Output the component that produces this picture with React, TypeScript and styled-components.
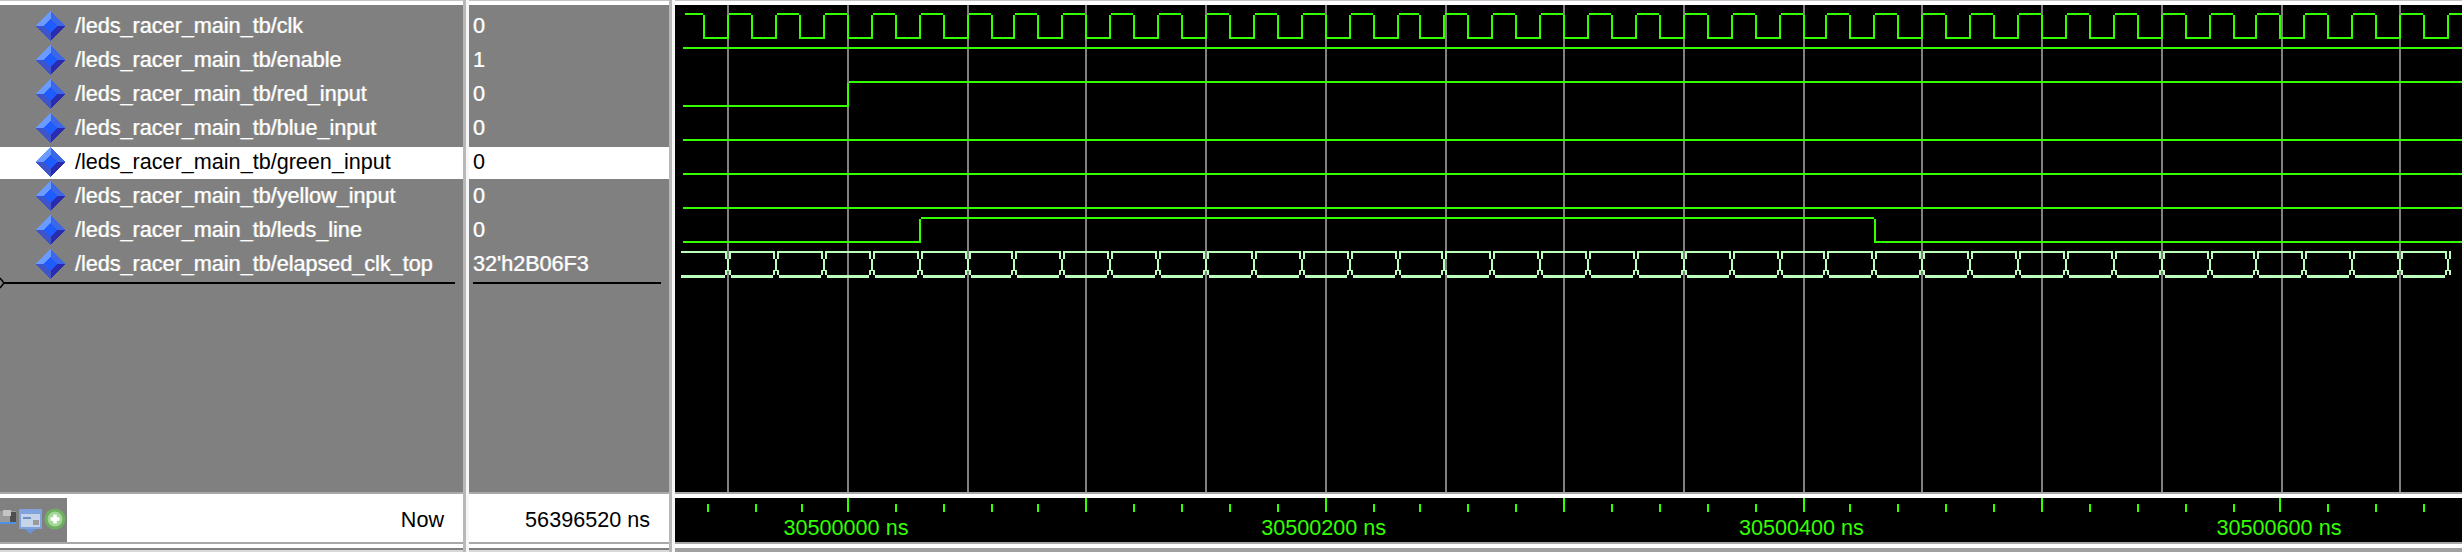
import React from "react";
import styled, { createGlobalStyle } from "styled-components";

const GRID_BASE = 848;
const GRID_STEP = 119.42;
const HALF_PERIOD = 23.885;
const VIEW_RIGHT = 2462;

const GREEN = "#33ff00";
const BUS_GREEN = "#bcffbc";

const SIGNALS = [
  { name: "/leds_racer_main_tb/clk", value: "0" },
  { name: "/leds_racer_main_tb/enable", value: "1" },
  { name: "/leds_racer_main_tb/red_input", value: "0" },
  { name: "/leds_racer_main_tb/blue_input", value: "0" },
  { name: "/leds_racer_main_tb/green_input", value: "0", selected: true },
  { name: "/leds_racer_main_tb/yellow_input", value: "0" },
  { name: "/leds_racer_main_tb/leds_line", value: "0" },
  { name: "/leds_racer_main_tb/elapsed_clk_top", value: "32'h2B06F3" },
];

const RULER_LABELS = ["30500000 ns", "30500200 ns", "30500400 ns", "30500600 ns"];

const GlobalStyle = createGlobalStyle`
  html, body {
    margin: 0;
    padding: 0;
    background: #ffffff;
    overflow: hidden;
  }
`;

const Window = styled.div`
  display: grid;
  grid-template-columns: 463px 6px 200px 6px 1fr;
  width: 2462px;
  height: 552px;
  overflow: hidden;
  font-family: "Liberation Sans", Arial, sans-serif;
`;

const Column = styled.div`
  display: flex;
  flex-direction: column;
  min-width: 0;
`;

const TopEdge = styled.div`
  height: 5px;
  box-sizing: border-box;
  flex: none;
  background: #ffffff;
  border-top: 1px solid #c4c4c4;
`;

const PanelBody = styled.div`
  height: 487px;
  flex: none;
  box-sizing: border-box;
  padding-top: 6px;
  background: #808080;
`;

const WaveBody = styled.div`
  height: 487px;
  flex: none;
  background: #000000;
`;

const Separator = styled.div`
  height: 6px;
  flex: none;
  box-sizing: border-box;
  background: #ffffff;
  border-top: 2px solid #a8a8a8;
`;

const Footer = styled.div`
  height: 44px;
  flex: none;
  display: flex;
  align-items: center;
  background: #ffffff;
  font-size: 21.6px;
  color: #000000;
`;

const FooterRight = styled(Footer)<{ $pad: number }>`
  justify-content: flex-end;
  padding-right: ${({ $pad }) => $pad}px;
  padding-bottom: 1px;
  box-sizing: border-box;
`;

const IconTray = styled.div`
  width: 67px;
  height: 44px;
  flex: none;
  background: #808080;
`;

const NowLabel = styled.span`
  margin-left: auto;
  margin-right: 19px;
`;

const ScrollBar = styled.div<{ $from: number; $to: number }>`
  height: 4px;
  flex: none;
  box-sizing: border-box;
  background: repeating-linear-gradient(90deg, #f4f4f4 0 2px, #d0d0d0 2px 4px) no-repeat
      ${({ $from }) => $from}px 2px / ${({ $from, $to }) => $to - $from}px 2px,
    #d8d8d8;
  border-top: 2px solid #808080;
`;

const PlainBar = styled.div`
  height: 4px;
  flex: none;
  background: #a0a0a0;
`;

const SplitterBar = styled.div`
  display: flex;
`;

const SplitterShade = styled.div`
  width: 3px;
  background: #b8b8b8;
`;

const SplitterLight = styled.div`
  width: 3px;
  background: #f6f6f6;
`;

const Row = styled.div<{ $selected?: boolean; $left: number }>`
  display: flex;
  align-items: center;
  gap: 9px;
  height: 32px;
  box-sizing: border-box;
  margin-bottom: 2px;
  padding: 0 0 2px ${({ $left }) => $left}px;
  background: ${({ $selected }) => ($selected ? "#ffffff" : "transparent")};
  color: ${({ $selected }) => ($selected ? "#000000" : "#ffffff")};
  font-size: 21.6px;
  white-space: nowrap;
  text-shadow: ${({ $selected }) =>
    $selected ? "none" : "-0.6px 0 rgba(190, 215, 255, 0.55), 0.6px 0 rgba(255, 225, 180, 0.55)"};
`;

const CursorLine = styled.div<{ $left: number; $right: number }>`
  display: flex;
  align-items: center;
  height: 2px;
  margin: -1px ${({ $right }) => $right}px 0 ${({ $left }) => $left}px;
  background: #000000;
`;

const CursorMark = styled.svg`
  flex: none;
  margin-left: -4px;
  overflow: visible;
`;

const Ruler = styled.div`
  position: relative;
  height: 44px;
  flex: none;
  background: #000000;
  overflow: hidden;
`;

const RulerLabel = styled.span`
  position: absolute;
  top: 19px;
  transform: translateX(-50%);
  color: ${GREEN};
  font-size: 21.6px;
  line-height: 22px;
  white-space: nowrap;
`;

const WaveSvg = styled.svg`
  display: block;
  shape-rendering: crispEdges;
`;

// the capture was doubled, so everything lands on a 2px raster
const snap = (x: number) => Math.floor((x + 0.7) / 2) * 2;

function clockPath() {
  let d = "";
  let k = -6;
  let prev = 684;
  let high = true;
  while (GRID_BASE + k * HALF_PERIOD < VIEW_RIGHT + 30) {
    const e = snap(GRID_BASE + k * HALF_PERIOD);
    const y = high ? 14 : 38;
    const from = high ? prev + 1 : prev - 1;
    const to = high ? e - 1 : e + 1;
    d += `M${from} ${y}H${to}M${e} 15V39`;
    prev = e;
    high = !high;
    k += 1;
  }
  return d;
}

function busPath() {
  let top = "";
  let bottom = "";
  let stubs = "";
  let prev = 678;
  for (let k = -5; GRID_BASE + k * HALF_PERIOD < VIEW_RIGHT + 30; k += 2) {
    const t = snap(GRID_BASE + k * HALF_PERIOD);
    top += `M${prev + 3} 252H${t - 3}`;
    bottom += `M${prev + 3} 276.5H${t - 3}`;
    stubs += `M${t - 2} 251V259M${t + 2} 251V259M${t} 259V271M${t - 2} 270V275M${t + 2} 270V275`;
    prev = t;
  }
  return { top, bottom, stubs };
}

function rulerTicks() {
  const ticks: { x: number; major: boolean }[] = [708, 756, 802].map((x) => ({ x, major: false }));
  for (let j = 0; GRID_BASE + j * 47.77 < VIEW_RIGHT; j += 1) {
    ticks.push({ x: snap(GRID_BASE + j * 47.77), major: j % 5 === 0 });
  }
  return ticks;
}

function gridLines() {
  const xs: number[] = [];
  for (let k = -1; GRID_BASE + k * GRID_STEP < VIEW_RIGHT; k += 1) {
    xs.push(Math.round((GRID_BASE + k * GRID_STEP) / 2) * 2);
  }
  return xs;
}

function Diamond() {
  return (
    <svg width="31" height="30" viewBox="0 0 31 30" shapeRendering="crispEdges" style={{ flex: "none" }}>
      <polygon points="15.5,0 0,15 8,15 15.5,8" fill="#6b9bff" />
      <polygon points="15.5,0 31,15 23,15 15.5,8" fill="#3c68e8" />
      <polygon points="0,15 15.5,30 15.5,22 8,15" fill="#3d55c8" />
      <polygon points="31,15 15.5,30 15.5,22 23,15" fill="#2b2bb0" />
      <polygon points="15.5,8 23,15 15.5,22 8,15" fill="#1f5cff" />
    </svg>
  );
}

function TrayIcons() {
  return (
    <svg width="67" height="44" viewBox="0 0 67 44">
      <rect x="0" y="13" width="16" height="11" fill="#9a9a9a" />
      <rect x="10" y="14" width="6" height="12" fill="#4e4e4e" />
      <rect x="3" y="12" width="8" height="6" fill="#c4c4c4" />
      <path d="M0 25H16" stroke="#4f8fe8" strokeWidth="2" />
      <rect x="19" y="11" width="23" height="20" fill="#7fa3dc" />
      <rect x="21" y="16" width="19" height="13" fill="#c6d4e8" />
      <rect x="23" y="19" width="8" height="2" fill="#6d8fc8" />
      <rect x="33" y="22" width="6" height="5" fill="#9a9a9a" />
      <path d="M25 31H36L30 36Z" fill="#6d93d8" />
      <circle cx="55" cy="21" r="10.5" fill="#6fb060" />
      <circle cx="55" cy="21" r="7.5" fill="#a6d69a" />
      <path d="M55 16.5V25.5M50.5 21H59.5" stroke="#ffffff" strokeWidth="3.5" />
    </svg>
  );
}

export default function App() {
  const bus = busPath();
  return (
    <>
      <GlobalStyle />
      <Window>
        <Column>
          <TopEdge />
          <PanelBody>
            {SIGNALS.map((s) => (
              <Row key={s.name} $left={35} $selected={s.selected}>
                <Diamond />
                <span>{s.name}</span>
              </Row>
            ))}
            <CursorLine $left={4} $right={8}>
              <CursorMark width="5" height="10" viewBox="0 0 5 10">
                <path d="M0 0L4 5L0 10" fill="none" stroke="#000" strokeWidth="1.5" />
              </CursorMark>
            </CursorLine>
          </PanelBody>
          <Separator />
          <Footer>
            <IconTray>
              <TrayIcons />
            </IconTray>
            <NowLabel>Now</NowLabel>
          </Footer>
          <Separator />
          <ScrollBar $from={28} $to={428} />
        </Column>

        <SplitterBar>
          <SplitterShade />
          <SplitterLight />
        </SplitterBar>

        <Column>
          <TopEdge />
          <PanelBody>
            {SIGNALS.map((s) => (
              <Row key={s.name} $left={4} $selected={s.selected}>
                <span>{s.value}</span>
              </Row>
            ))}
            <CursorLine $left={4} $right={8} />
          </PanelBody>
          <Separator />
          <FooterRight $pad={19}>56396520 ns</FooterRight>
          <Separator />
          <ScrollBar $from={33} $to={163} />
        </Column>

        <SplitterBar>
          <SplitterShade />
          <SplitterLight />
        </SplitterBar>

        <Column>
          <TopEdge />
          <WaveBody>
            <WaveSvg width="1787" height="487" viewBox="675 5 1787 487">
              {gridLines().map((x) => (
                <path key={x} d={`M${x} 5V492`} stroke="#808080" strokeWidth="2" />
              ))}
              <g stroke={GREEN} strokeWidth="2" fill="none">
                <path d={clockPath()} />
                <path d="M683 48H2462" />
                <path d="M683 106H849M848 83V107M849 82H2462" />
                <path d="M683 140H2462" />
                <path d="M683 174H2462" />
                <path d="M683 208H2462" />
                <path d="M683 242H920M920 219V243M921 218H1874M1875 219V243M1875 242H2462" />
              </g>
              <g stroke={BUS_GREEN} fill="none">
                <path d={bus.top} strokeWidth="2" />
                <path d={bus.bottom} strokeWidth="3" />
                <path d={bus.stubs} strokeWidth="2" />
              </g>
            </WaveSvg>
          </WaveBody>
          <Separator />
          <Ruler>
            <WaveSvg width="1787" height="44" viewBox="675 498 1787 44">
              {rulerTicks().map((t) => (
                <path key={t.x} d={`M${t.x} ${t.major ? 498 : 504}V512`} stroke={GREEN} strokeWidth="2" />
              ))}
            </WaveSvg>
            {RULER_LABELS.map((label, i) => (
              <RulerLabel key={label} style={{ left: 171 + i * 477.67 }}>
                {label}
              </RulerLabel>
            ))}
          </Ruler>
          <Separator />
          <PlainBar />
        </Column>
      </Window>
    </>
  );
}
